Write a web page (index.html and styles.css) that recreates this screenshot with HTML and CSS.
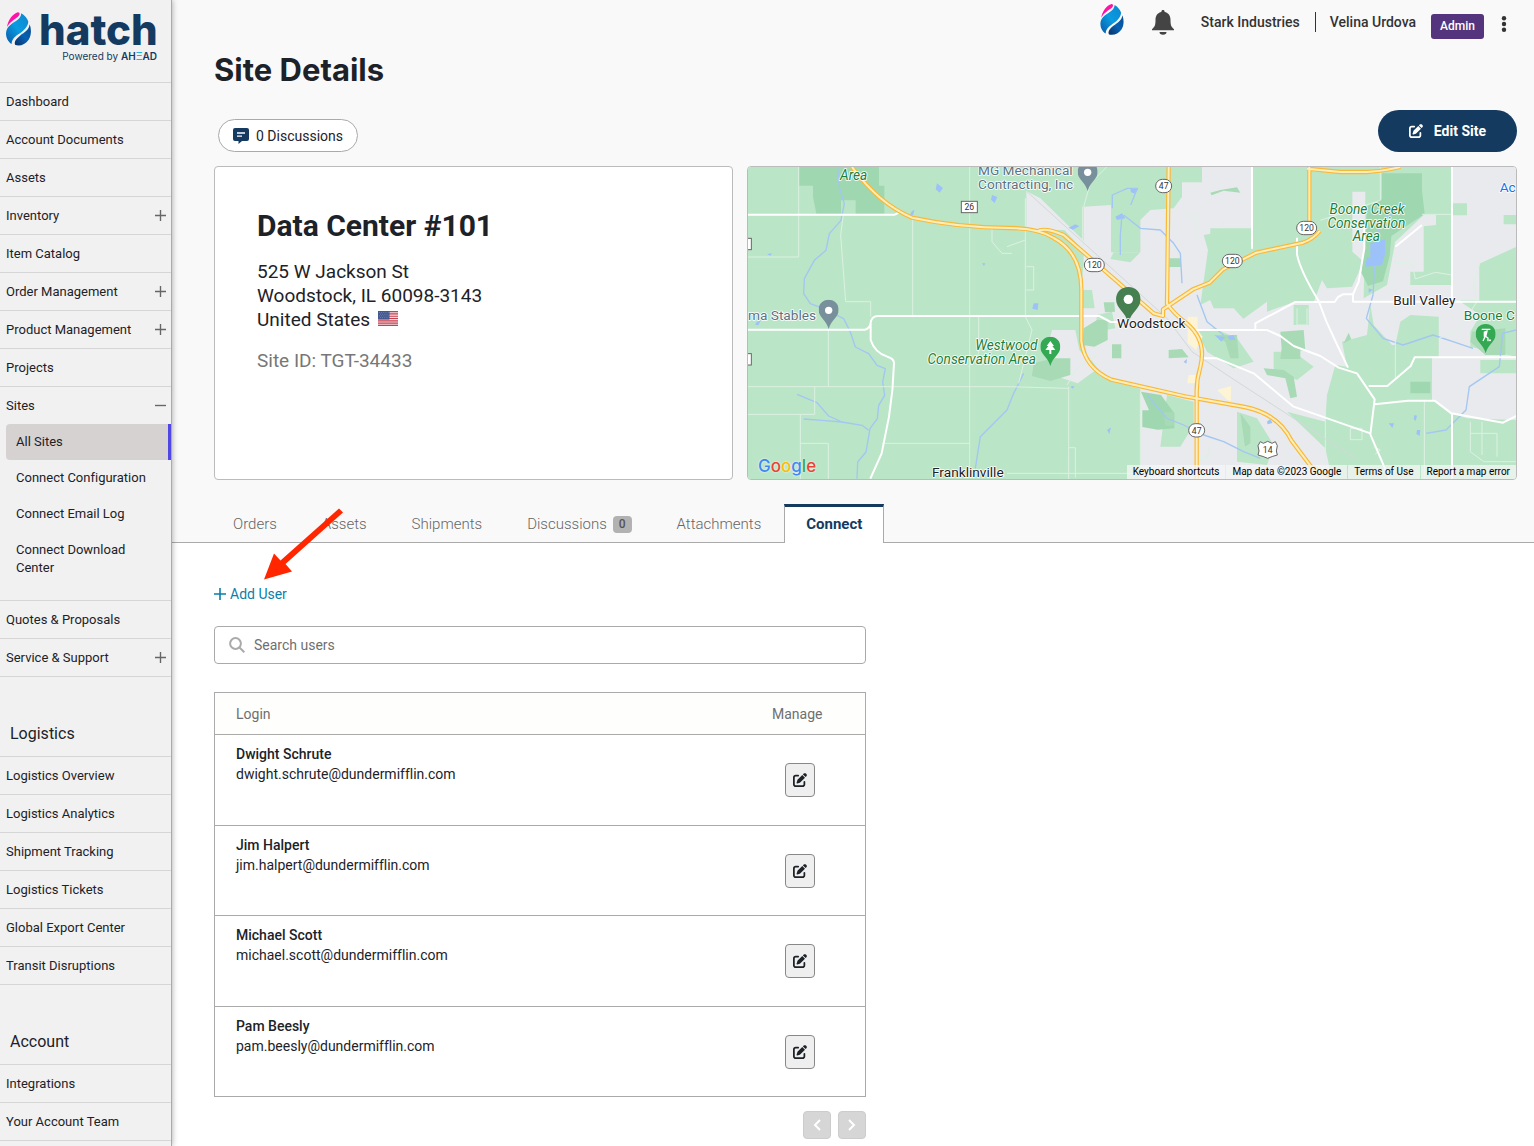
FILE: index.html
```html
<!DOCTYPE html>
<html lang="en">
<head>
  <meta charset="UTF-8">
  <meta name="viewport" content="width=device-width, initial-scale=1.0">
  <title>Site Details</title>
  <link rel="stylesheet" href="styles.css">
</head>
<body>
  <!-- shared icons -->
  <svg class="sprite" aria-hidden="true">
    <defs>
      <linearGradient id="drop-mid" x1="0" y1="1" x2="1" y2="0">
        <stop offset="0" stop-color="#0759a8"/>
        <stop offset=".5" stop-color="#0a9be0"/>
        <stop offset="1" stop-color="#0b86cf"/>
      </linearGradient>
      <linearGradient id="drop-low" x1="0" y1="1" x2="1" y2="0">
        <stop offset="0" stop-color="#0a2f66"/>
        <stop offset=".5" stop-color="#0561b4"/>
        <stop offset="1" stop-color="#0b4a8c"/>
      </linearGradient>
    </defs>
    <symbol id="drop" viewBox="0 0 75 100">
      <path fill="#ff12a8" d="M3 44C6 24 20 4 36 0c7 1 6 8 0 13C26 21 12 28 3 44z"/>
      <path fill="url(#drop-mid)" d="M46 3c10 6 18 15 21 25-2 18-16 28-30 38-13 9-20 17-20 29C6 89 0 76 0 62c1-11 6-18 13-24C27 26 44 22 46 3z"/>
      <path fill="url(#drop-low)" d="M71 36c6 16 5 34-3 46-10 15-26 20-40 16-6-10 4-20 14-28 14-10 27-17 29-34z"/>
    </symbol>
    <symbol id="edit" viewBox="0 0 512 512">
      <path fill="currentColor" d="M471.6 21.7c-21.9-21.9-57.3-21.9-79.2 0L362.3 51.7l97.9 97.9 30.1-30.1c21.9-21.9 21.9-57.3 0-79.2L471.6 21.7zm-299.2 220c-6.1 6.1-10.8 13.6-13.5 21.9l-29.6 88.8c-2.9 8.6-.6 18.1 5.8 24.6s15.9 8.7 24.6 5.8l88.8-29.6c8.2-2.7 15.7-7.4 21.9-13.5L437.7 172.3 339.7 74.3 172.4 241.7zM96 64C43 64 0 107 0 160V416c0 53 43 96 96 96H352c53 0 96-43 96-96V320c0-17.7-14.3-32-32-32s-32 14.3-32 32v96c0 17.7-14.3 32-32 32H96c-17.7 0-32-14.3-32-32V160c0-17.7 14.3-32 32-32h96c17.7 0 32-14.3 32-32s-14.3-32-32-32H96z"/>
    </symbol>
    <symbol id="plus" viewBox="0 0 12 12">
      <path fill="none" stroke="currentColor" stroke-width="1.500" d="M6 0v12M0 6h12"/>
    </symbol>
    <symbol id="pin" viewBox="0 0 60 88">
      <path fill="currentColor" d="M30 0C12 0 0 13 0 30c0 23 22 29 30 58 8-29 30-35 30-58C60 13 48 0 30 0z"/>
    </symbol>
  </svg>

  <div class="app">
    <aside class="sidebar">
      <a class="logo" href="#">
        <svg class="logo-drop" aria-hidden="true"><use href="#drop"/></svg>
        <span class="logo-text">
          <span class="logo-name">hatch</span>
          <span class="logo-by">Powered by <b>AH<i>Ξ</i>AD</b></span>
        </span>
      </a>
      <nav>
        <ul class="menu">
          <li><a href="#">Dashboard</a></li>
          <li><a href="#">Account Documents</a></li>
          <li><a href="#">Assets</a></li>
          <li><a href="#">Inventory <svg class="toggle"><use href="#plus"/></svg></a></li>
          <li><a href="#">Item Catalog</a></li>
          <li><a href="#">Order Management <svg class="toggle"><use href="#plus"/></svg></a></li>
          <li><a href="#">Product Management <svg class="toggle"><use href="#plus"/></svg></a></li>
          <li><a href="#">Projects</a></li>
          <li>
            <a href="#">Sites <svg class="toggle" viewBox="0 0 12 12"><path d="M0 6h12" stroke="currentColor" stroke-width="1.500"/></svg></a>
            <ul class="submenu">
              <li><a class="active" href="#">All Sites</a></li>
              <li><a href="#">Connect Configuration</a></li>
              <li><a href="#">Connect Email Log</a></li>
              <li><a href="#">Connect Download Center</a></li>
            </ul>
          </li>
          <li><a href="#">Quotes &amp; Proposals</a></li>
          <li><a href="#">Service &amp; Support <svg class="toggle"><use href="#plus"/></svg></a></li>
        </ul>
        <h2>Logistics</h2>
        <ul class="menu">
          <li><a href="#">Logistics Overview</a></li>
          <li><a href="#">Logistics Analytics</a></li>
          <li><a href="#">Shipment Tracking</a></li>
          <li><a href="#">Logistics Tickets</a></li>
          <li><a href="#">Global Export Center</a></li>
          <li><a href="#">Transit Disruptions</a></li>
        </ul>
        <h2>Account</h2>
        <ul class="menu">
          <li><a href="#">Integrations</a></li>
          <li><a href="#">Your Account Team</a></li>
        </ul>
      </nav>
    </aside>

    <div class="content">
      <div class="top">
        <header class="topbar">
          <svg class="top-drop" aria-hidden="true"><use href="#drop"/></svg>
          <button class="icon-btn bell" aria-label="Notifications">
            <svg width="22" height="25" viewBox="0 0 22 25"><path fill="#444" d="M11 0c-1 0-1.600.7-1.600 1.600v.5C5.600 2.800 3.500 5.800 3.500 9.800c0 5-.5 7-3.500 9.400V20.200h22v-1c-3-2.400-3.500-4.400-3.500-9.400 0-4-2.100-7-5.900-7.700v-.5C12.600.7 12 0 11 0zM7.500 22h7a3.500 2.800 0 0 1-7 0z"/></svg>
          </button>
          <a class="company" href="#">Stark Industries</a>
          <a class="user" href="#">Velina Urdova</a>
          <span class="role">Admin</span>
          <button class="icon-btn more" aria-label="More">
            <svg width="6" height="16" viewBox="0 0 6 16"><g fill="#333"><circle cx="3" cy="2.200" r="2.200"/><circle cx="3" cy="8" r="2.200"/><circle cx="3" cy="13.800" r="2.200"/></g></svg>
          </button>
        </header>

        <h1>Site Details</h1>

        <div class="actions">
          <button class="discuss">
            <svg width="16" height="16" viewBox="0 0 16 16"><path fill="#143a60" d="M2 0h12a2 2 0 0 1 2 2v9a2 2 0 0 1-2 2H9l-3.500 3V13H2a2 2 0 0 1-2-2V2a2 2 0 0 1 2-2z"/><path stroke="#fff" stroke-width="1.300" d="M4 5h8M4 8.200h5"/></svg>
            0 Discussions
          </button>
          <button class="edit-site">
            <svg width="14" height="14" aria-hidden="true"><use href="#edit"/></svg>
            Edit Site
          </button>
        </div>

        <div class="cards">
          <section class="card site">
            <h2>Data Center #101</h2>
            <address>
              525 W Jackson St<br>
              Woodstock, IL 60098-3143<br>
              United States
              <svg class="flag" width="20" height="15" viewBox="0 0 20 15" role="img" aria-label="US">
                <rect width="20" height="15" rx="1" fill="#f3dfe2"/>
                <path stroke="#c8414f" stroke-width="1.150" d="M0 .6h20M0 2.900h20M0 5.200h20M0 7.500h20M0 9.800h20M0 12.100h20M0 14.400h20"/>
                <rect width="11.500" height="8.600" fill="#43588f"/>
                <path stroke="#9fabc9" stroke-width=".6" stroke-dasharray=".8 1.400" d="M1 1.500h10M2 3.200h9M1 4.900h10M2 6.600h9"/>
              </svg>
            </address>
            <p class="site-id">Site ID: TGT-34433</p>
          </section>

          <section class="card map">
            <svg class="map-canvas" viewBox="3 6 2304 936" preserveAspectRatio="xMidYMid slice">
              <rect width="2320" height="950" fill="#bbe5c7"/>
              <!-- built-up land -->
              <g fill="#e8eaed">
                <path d="M838 78l42 22 210 205-32 10-50-60-56-60H838z"/>
                <path d="M1010 125L1092 120V262H1180V165L1210 135 1280 130 1305 95V52H1365V6H1515V190H1390V330L1370 360 1400 430H1460L1515 490 1560 440 1640 412H1700L1725 345 1740 370 1815 365 1850 290 1816 260V80H1855V170L1850 400 1920 360 1945 230 2030 150H2067V180L2030 184V320H1990V360H2140V410L2200 450 2170 500V545L2307 575V765L2160 760 2115 745 2055 705V575H2075V455L1990 450 1960 470 1945 540H1935L1880 480 1870 420 1860 510 1785 530 1800 605 1765 600 1740 690 1735 770 1620 740 1735 850 1755 942H1180V672L1110 650 1060 620 1020 570 1005 500V345L1010 290z"/>
                <path d="M2115 6h192v240l-110 50v110h-82zM1560 410v120l-60 60-50-100zM915 495h70l12 60 50 60-55 40-60-20-10-50-15-60z"/>
              </g>
              <!-- farmland pieces inside the town -->
              <g fill="#bbe5c7">
                <path d="M1390 205h125v115l-30 20-45 90-40-30-40 20zM1005 375h30l8 55h-38zM1100 262h80l-30 30-60-10zM1370 210l60-10 20 60-60 20zM1050 450l45-10 10 50-60 10z"/>
                <path d="M1260 690l80 20v70l-40 65-60 0zM1470 740l60 20 50 80-20 60-90-10z"/>
                <path d="M1350 500l50-10 70 30 50 70-60 20-80-50zM1580 560l60 0 60 45-50 40-70-30z"/>
                <path d="M2110 115h50v36h-50zM2270 150h37v28h-37zM1640 420h45v60h-45zM2200 585h107v40h-107z"/>
              </g>
              <!-- parks -->
              <g fill="#9fd8b0">
                <path d="M156 6h240v56h16v84h-86v-40h-44v40h-74l-10-50V62h-42zM1905 25h120v50l8 72-100 66-5 60-20 76-45 14-20-40 10-100 8-100 44-20zM1990 650h60v35h-60z"/>
                <path d="M1182 680l60 10 40 55v45l-50 4-46-8v-50h20z"/>
              </g>
              <g fill="#a8dab5">
                <path d="M860 595l60-15 50 0v50l-60 18-55-15zM1010 490l40-25h32v60l-40 20-35-5zM1095 538h28v42h-28zM1265 555l40-3 20 25-60 3zM1070 412l32 0 2 28-30 2zM1267 280h35v26h-35zM1390 83l30-8 50-8 10 16-50-6-36 14zM1400 510l70 0 5 70-25 0-15-50zM1250 742h30v40h-25zM1600 500l70-5 5 60-70 8zM1605 540h55v42h-60zM1550 610l60 5 30 20 10 60-20 5-15-60-55-10zM2175 500l100-10v80h-60l-45-40zM1790 535l15-32 8 20zM1480 745l30 40v50l-16 10z"/>
              </g>
              <g fill="#fdf3d5">
                <path d="M1322 455h30v40l15 20-20 40-25-20zM1325 630h20v25h-25zM1410 675l42-12v45l-12-4z"/>
              </g>
              <!-- water -->
              <g fill="#9dc2f9">
                <path d="M1870 235l45-12 0 40-10 38-50 4 5-30 10 4zM570 55l18 14-10 14-12-10zM735 90l16 6-8 18-11-10zM495 138l8-4-5 16-12 4zM1105 155l20-10 10 15-25 5zM965 188l20-10 12 6-20 10zM1150 72l24 0-10 14-12-4zM860 415l14 0-2 20-16-4zM1405 512l30 4-12 14zM1440 515l20-5 5 14-15 2zM1865 370l12 4-12 10zM2010 795l10 0-2 18-10-6zM1080 795l12-8-5 20zM1925 775l16 0-5 14zM30 470l12-5-8 16-10-2zM60 268l14-4-3 8zM705 295l10 0-4 8zM1560 770l10-8 6 12-14 4zM2002 750l8 2-4 16-6-6zM1310 590l10-8-2 14zM970 665l12-3-4 9z"/>
              </g>
              <g class="river">
                <path d="M272 6l5 60 15 50-10 50-35 40-10 50-35 30-30 55 -2 45 20 30 40 15 60 30 20 40 15 45 40 20 25 35 25 10 -8 40 6 40-18 30-4 40-22 30-12 70-25 30-2 50"/>
                <path d="M150 688l60 25 35 40 40 18-60-5-55-4M285 771l60 10 20 15M780 735l-80 80-15 95M780 735l20-50 30-60M1200 690l60 70 50 20 60 30 60 20 60 30 50 20M1130 150l50 40 60 5 40 40 20 30 5 90M1430 510l-50-40-30-80M1125 150l-5 60 0 60M1096 130V90l45-20h30l-20 50M1885 225l20-60 70-50M1883 300l-5 90-20 70 50 60 60 20 90-30 60 20 60 20M2307 495l-40 10-10 100-90 60-10 70-60 60-60 10"/>
              </g>
              <!-- minor roads -->
              <g class="minor">
                <path d="M3 276h152V6M289 150l-8 60 15 200 75 0v45M497 160v290M668 6v925M3 665h780l180 5M244 495v170M3 748h200v-83M160 748v194M160 835h84v107M405 835h263M695 455v110l-30 40M735 190v40l30 35 30 0M780 245l55-20M835 100v355M835 455l20 40-40 160M965 665v277M1010 125l20-70 50-50M1180 680v240M1007 125v120M838 305h22v70h-22M965 848h20v90M780 925h570M1315 150h35v70M1430 190v-25M960 660l30-50 60-40M1350 880h30l10-40"/>
                <path d="M1900 6v100l-180 60M2115 148h-90M1945 230v410M1945 292h50l10 50 60-20 50 8M2032 708v234M1735 735v205M2200 290l-20 60 10 60-60 90-55 20M1650 430v50h30v-50M1810 790h35v34h-35zM2170 770v90l40 30h97M2205 770v100M2170 805h80v70M1880 845l20 10-15 12"/>
              </g>
              <path class="rail" d="M840 80l420 380 75 100 120 80 370 240"/>
              <!-- local roads -->
              <g class="road">
                <path d="M3 149h440l16-8M3 494h350q15-2 18-20 2-20 20-21h666l34 18h30M371 475v50q12 38 50 50 20 5 20 20-2 80-15 160l-22 110-34 76M1515 6v245M1345 495h215l-35 0v-20l120-64h118l10-15 15-8h30v22h490M1360 580h50l110 45 60 50 60 50 230 80M1650 218l0 50q10 50 65 140 20 60 50 120l38 80M1560 495l40 18 40 30 80 30 55 35 55 17 53 78-13 105 60 140M1865 663h56l70-60 12-26h304M1883 718l100-11h80l50 38 155 28 40-20M2115 6v404M1817 390l18-40 17-100V180M1945 245l80-65M2115 745v197"/>
              </g>
              <!-- highways -->
              <g class="highway-edge">
                <path d="M315 6q80 110 180 152 140 30 290 31 90 0 135 30 85 45 83 160v150q10 80 90 115l220 50 180 32q100 20 140 100l60 80 60 30"/>
                <path d="M870 200q20-15 80 10l270 235 28 8v-20l90-60 50-20 40-40 100-50 140-30q30-10 50-35"/>
                <path d="M1265 6l-5 410q20 30 60 60 60 50 40 130-12 40-11 80v256M1687 6v190M1680 11l100 10h80q50-2 100-15"/>
              </g>
              <g class="highway">
                <path d="M315 6q80 110 180 152 140 30 290 31 90 0 135 30 85 45 83 160v150q10 80 90 115l220 50 180 32q100 20 140 100l60 80 60 30"/>
                <path d="M870 200q20-15 80 10l270 235 28 8v-20l90-60 50-20 40-40 100-50 140-30q30-10 50-35"/>
                <path d="M1265 6l-5 410q20 30 60 60 60 50 40 130-12 40-11 80v256M1687 6v190M1680 11l100 10h80q50-2 100-15"/>
              </g>
              <!-- road shields -->
              <g class="shield">
                <rect x="643" y="109" width="48" height="34"/><text x="667" y="136">26</text>
                <rect x="-20" y="220" width="33" height="34"/><rect x="-20" y="566" width="33" height="34"/>
                <rect x="1226" y="43" width="48" height="40" rx="20"/><text x="1250" y="73">47</text>
                <rect x="1012" y="280" width="60" height="40" rx="20"/><text x="1042" y="310">120</text>
                <rect x="1426" y="268" width="60" height="40" rx="20"/><text x="1456" y="298">120</text>
                <rect x="1649" y="169" width="60" height="40" rx="20"/><text x="1679" y="199">120</text>
                <rect x="1325" y="776" width="48" height="40" rx="20"/><text x="1349" y="806">47</text>
                <path d="M1540 830l9 5 13-6 13 6 10-5 6 12q-6 18 0 28-16 4-29 10-13-6-29-10 6-10 0-28z"/><text x="1562" y="863">14</text>
              </g>
              <!-- places -->
              <g class="label park">
                <text x="320" y="46">Area</text>
                <text x="778" y="554">Westwood</text><text x="704" y="596">Conservation Area</text>
                <text x="1860" y="146">Boone Creek</text><text x="1858" y="188">Conservation</text><text x="1858" y="229">Area</text>
              </g>
              <g class="label poi">
                <text class="start" x="693" y="30">MG Mechanical</text>
                <text class="start" x="693" y="72">Contracting, Inc</text>
                <text class="start" x="3" y="465">ma Stables</text>
              </g>
              <g class="label">
                <text class="start" x="555" y="935">Franklinville</text>
                <text x="2032" y="420">Bull Valley</text>
                <text class="start golf" x="2150" y="464">Boone C</text>
                <text class="start transit" x="2258" y="81">Ac</text>
              </g>
              <use href="#pin" x="215" y="404" width="60" height="88" color="#78909c"/><circle cx="245" cy="436" r="11" fill="#fff"/>
              <use href="#pin" x="992" y="-10" width="60" height="88" color="#78909c"/><circle cx="1022" cy="22" r="11" fill="#fff"/>
              <use href="#pin" x="880" y="515" width="60" height="88" color="#34a853"/>
              <path fill="#fff" d="M910 528l11 15h-5l9 12h-12v12h-6v-12h-12l9-12h-5z"/>
              <use href="#pin" x="2186" y="477" width="60" height="88" color="#34a853"/>
              <path fill="none" stroke="#fff" stroke-width="4" d="M2204 493h26M2214 503v12l-6 13M2214 513l9 6v10"/><path fill="#fff" d="M2210 500l12-5 0 4-4 16h-8z"/><circle cx="2229" cy="526" r="3" fill="#fff"/>
              <use href="#pin" x="1107" y="366" width="74" height="108" color="#467f50"/><circle cx="1144" cy="403" r="14" fill="#fff"/>
              <g class="label"><text x="1213" y="489">Woodstock</text></g>
            </svg>
            <a class="google" href="#"><span class="g-blue">G</span><span class="g-red">o</span><span class="g-yellow">o</span><span class="g-blue">g</span><span class="g-green">l</span><span class="g-red">e</span></a>
            <div class="map-bar">
              <button>Keyboard shortcuts</button>
              <span>Map data ©2023 Google</span>
              <a href="#">Terms of Use</a>
              <a href="#">Report a map error</a>
            </div>
          </section>
        </div>

        <nav class="tabs">
          <a href="#">Orders</a>
          <a href="#">Assets</a>
          <a href="#">Shipments</a>
          <a href="#">Discussions <span class="count">0</span></a>
          <a href="#">Attachments</a>
          <a class="current" href="#">Connect</a>
        </nav>
      </div>

      <main class="panel">
        <div class="add-row">
          <a class="add-user" href="#"><svg width="12" height="12" viewBox="0 0 12 12"><path stroke="currentColor" stroke-width="1.600" d="M6 0v12M0 6h12"/></svg> Add User</a>
          <svg class="arrow" width="80" height="72" viewBox="0 0 80 72" aria-hidden="true">
            <path fill="#ff2600" d="M76 .5l4 4-57.500 51.500 6.500 7.500L1 71.500l10-26 6.500 7z"/>
          </svg>
        </div>

        <div class="search">
          <svg width="16" height="16" viewBox="0 0 16 16" aria-hidden="true"><g fill="none" stroke="#aaa" stroke-width="2"><circle cx="6.500" cy="6.500" r="5.400"/><path d="M10.500 10.500l4.800 4.800"/></g></svg>
          <input type="search" aria-label="Search users" placeholder="Search users">
        </div>

        <table class="users">
          <thead>
            <tr><th>Login</th><th class="manage">Manage</th></tr>
          </thead>
          <tbody>
            <tr>
              <td><strong>Dwight Schrute</strong><br>dwight.schrute@dundermifflin.com</td>
              <td class="manage"><button aria-label="Edit Dwight Schrute"><svg width="14" height="14"><use href="#edit"/></svg></button></td>
            </tr>
            <tr>
              <td><strong>Jim Halpert</strong><br>jim.halpert@dundermifflin.com</td>
              <td class="manage"><button aria-label="Edit Jim Halpert"><svg width="14" height="14"><use href="#edit"/></svg></button></td>
            </tr>
            <tr>
              <td><strong>Michael Scott</strong><br>michael.scott@dundermifflin.com</td>
              <td class="manage"><button aria-label="Edit Michael Scott"><svg width="14" height="14"><use href="#edit"/></svg></button></td>
            </tr>
            <tr>
              <td><strong>Pam Beesly</strong><br>pam.beesly@dundermifflin.com</td>
              <td class="manage"><button aria-label="Edit Pam Beesly"><svg width="14" height="14"><use href="#edit"/></svg></button></td>
            </tr>
          </tbody>
        </table>

        <div class="pager">
          <button disabled aria-label="Previous page"><svg width="8" height="12" viewBox="0 0 8 12"><path d="M7 1L2 6l5 5" fill="none" stroke="#fff" stroke-width="2"/></svg></button>
          <button disabled aria-label="Next page"><svg width="8" height="12" viewBox="0 0 8 12"><path d="M1 1l5 5-5 5" fill="none" stroke="#fff" stroke-width="2"/></svg></button>
        </div>
      </main>
    </div>
  </div>
</body>
</html>
```
FILE: styles.css
```css
*{
  box-sizing: border-box;
}
body{
  margin: 0;
  font-family: Roboto, "Liberation Sans", sans-serif;
  font-size: 14px;
  font-variant-ligatures: none;
  line-height: 20px;
  color: #1d2228;
  background: #fff;
}
a{
  color: inherit;
  text-decoration: none;
}
button, input{
  font: inherit;
  color: inherit;
}
button{
  cursor: pointer;
}
ul{
  list-style: none;
  margin: 0;
  padding: 0;
}
svg{
  flex: none;
}
.sprite{
  position: absolute;
  width: 0;
  height: 0;
}
.app{
  display: flex;
  height: 100vh;
  overflow: hidden;
}

/* sidebar */
.sidebar{
  flex: none;
  width: 172px;
  overflow: hidden;
  background: #f1f1f1;
  border-right: 1px solid #aaa;
  box-shadow: 0 0 6px rgba(0, 0, 0, 0.35);
  z-index: 1;
}
.logo{
  display: flex;
  gap: 8px;
  height: 82px;
  padding: 12px 0 0 6px;
  color: #143a60;
}
.logo-drop{
  width: 25px;
  height: 34px;
}
.logo-text{
  display: flex;
  flex-direction: column;
  width: 118px;
}
.logo-name{
  font-family: Inter, sans-serif;
  font-weight: 800;
  font-size: 42px;
  line-height: 36px;
}
.logo-by{
  font-family: Inter, sans-serif;
  font-size: 10px;
  line-height: 16px;
  text-align: right;
}
.logo-by b{
  font-weight: 600;
}
.logo-by i{
  font-style: normal;
  color: #19b5e0;
}
.menu > li{
  border-top: 1px solid #d6d6d6;
}
.menu > li:last-child{
  border-bottom: 1px solid #d6d6d6;
}
.menu > li > a{
  display: flex;
  align-items: center;
  justify-content: space-between;
  height: 37px;
  padding: 0 5px 0 6px;
}
.menu a{
  font-size: 13px;
}
.toggle{
  width: 11px;
  height: 11px;
  color: #666;
}
.submenu{
  padding: 0 0 14px 6px;
}
.submenu a{
  display: block;
  padding: 9px 10px;
  line-height: 18px;
}
.submenu .active{
  background: #d6d2d2;
  border-right: 3px solid #4f46e5;
  border-radius: 4px 0 0 4px;
}
.sidebar h2{
  margin: 0;
  padding: 47px 10px 12px;
  font-size: 16px;
  font-weight: 400;
}

/* page head */
.content{
  flex: 1;
  min-width: 0;
}
.top{
  background: #f9f9f9;
  border-bottom: 1px solid #aaa;
}
.topbar{
  display: flex;
  align-items: center;
  justify-content: flex-end;
  height: 44px;
  padding-right: 27px;
  font-weight: 500;
  color: #333;
}
.top-drop{
  width: 24px;
  height: 31px;
  margin-bottom: 6px;
}
.icon-btn{
  display: flex;
  padding: 0;
  background: none;
  border: none;
}
.bell{
  margin: 0 27px 0 28px;
}
.user{
  margin-left: 15px;
  padding-left: 14px;
  border-left: 1px solid #333;
}
.role{
  margin: 8px 17px 0 15px;
  padding: 2px 9px 3px;
  border-radius: 3px;
  background: #53347d;
  color: #fff;
  font-size: 12px;
}
.more{
  margin-top: 4px;
}
h1{
  margin: 0;
  padding: 6px 42px 0;
  font-family: Inter, sans-serif;
  font-size: 31px;
  font-weight: 700;
  line-height: 40px;
}
.actions{
  display: flex;
  justify-content: space-between;
  align-items: flex-end;
  padding: 20px 17px 0 46px;
}
.discuss{
  display: flex;
  align-items: center;
  gap: 7px;
  height: 33px;
  padding: 0 14px;
  background: #fff;
  border: 1px solid #aaa;
  border-radius: 17px;
}
.edit-site{
  display: flex;
  align-items: center;
  gap: 11px;
  height: 42px;
  padding: 0 31px;
  background: #143a60;
  border: none;
  border-radius: 21px;
  color: #fff;
  font-weight: 700;
}
.cards{
  display: grid;
  grid-template-columns: 519fr 770fr;
  gap: 14px;
  padding: 14px 17px 24px 42px;
}
.card{
  height: 314px;
  border: 1px solid #bbb;
  border-radius: 4px;
  background: #fff;
}
.site{
  padding: 41px 42px;
}
.site h2{
  margin: 0 0 16px;
  font-size: 30px;
  line-height: 36px;
}
.site address{
  font-size: 19px;
  font-style: normal;
  line-height: 24px;
}
.flag{
  margin-left: 3px;
}
.site-id{
  margin: 17px 0 0;
  font-size: 19px;
  line-height: 24px;
  color: #777;
}

/* map */
.map{
  position: relative;
  overflow: hidden;
}
.map-canvas{
  display: block;
  width: 100%;
  height: 100%;
}
.river{
  fill: none;
  stroke: #a3c6f3;
  stroke-width: 4;
  stroke-linejoin: round;
}
.minor{
  fill: none;
  stroke: #dcf1e2;
  stroke-width: 3;
}
.rail{
  fill: none;
  stroke: #d3d8da;
  stroke-width: 3;
}
.road{
  fill: none;
  stroke: #fff;
  stroke-width: 6;
  stroke-linejoin: round;
}
.highway-edge, .highway{
  fill: none;
  stroke: #f9b938;
  stroke-width: 13;
  stroke-linejoin: round;
}
.highway{
  stroke: #ffeebb;
  stroke-width: 6;
}
.shield rect, .shield path{
  fill: #fff;
  stroke: #666;
  stroke-width: 3;
}
.shield text{
  font-size: 26px;
  fill: #333;
  text-anchor: middle;
}
.label text{
  font-size: 41px;
  text-anchor: middle;
  fill: #202124;
  stroke: #fff;
  stroke-width: 5;
  stroke-linejoin: round;
  paint-order: stroke;
}
.label .start{
  text-anchor: start;
}
.park text{
  font-style: italic;
  fill: #188038;
}
.poi text{
  fill: #5b7282;
}
.label .golf{
  fill: #188038;
}
.label .transit{
  fill: #1a73e8;
}
.google{
  position: absolute;
  left: 10px;
  bottom: 3px;
  font-family: Inter, sans-serif;
  font-size: 17px;
  font-weight: 500;
  text-shadow: 0 0 2px #fff;
}
.g-blue{
  color: #4285f4;
}
.g-red{
  color: #ea4335;
}
.g-yellow{
  color: #fbbc05;
}
.g-green{
  color: #34a853;
}
.map-bar{
  position: absolute;
  right: 0;
  bottom: 0;
  display: flex;
  gap: 1px;
  font-size: 10px;
  line-height: 14px;
  color: #000;
}
.map-bar > *{
  padding: 0 6px;
  background: rgba(245, 245, 245, 0.75);
  border: none;
}

/* tabs */
.tabs{
  display: flex;
  padding-left: 42px;
  margin-bottom: -1px;
  font-size: 15px;
  font-weight: 300;
  color: #666;
}
.tabs a{
  display: flex;
  align-items: center;
  gap: 6px;
  height: 39px;
  padding: 0 23px 0 22px;
}
.tabs a:first-child{
  padding-left: 19px;
}
.count{
  margin-top: 2px;
  padding: 0 6px;
  border-radius: 4px;
  background: #b2b2b2;
  color: #555;
  font-size: 12px;
  font-weight: 500;
  line-height: 17px;
}
.tabs .current{
  padding: 0 21px 2px;
  background: #fff;
  border: 1px solid #aaa;
  border-top: 3px solid #143a60;
  border-bottom: none;
  color: #143a60;
  font-weight: 700;
}

/* users */
.panel{
  width: 50%;
  min-width: 694px;
  padding: 41px 0 0 42px;
}
.add-row{
  position: relative;
}
.add-user{
  display: inline-flex;
  align-items: center;
  gap: 4px;
  color: #0a7fa8;
}
.arrow{
  position: absolute;
  left: 49px;
  bottom: 25px;
}
.search{
  display: flex;
  align-items: center;
  gap: 9px;
  height: 38px;
  margin: 21px 0 28px;
  padding: 0 14px;
  border: 1px solid #aaa;
  border-radius: 4px;
}
.search input{
  flex: 1;
  padding: 0;
  border: none;
  outline: none;
  background: none;
}
.search input::placeholder{
  color: #6f6f6f;
}
.users{
  width: 100%;
  border: 1px solid #aaa;
  border-collapse: collapse;
}
.users th{
  height: 42px;
  padding: 0 21px;
  background: #fefefc;
  color: #6f6f6f;
  font-weight: 400;
  text-align: left;
}
.users td{
  height: 90px;
  padding: 9px 21px;
  border-top: 1px solid #aaa;
  vertical-align: top;
}
.users tr:nth-child(odd) td{
  height: 91px;
}
.users strong{
  font-weight: 500;
}
.users .manage{
  width: 136px;
  padding: 0;
  text-align: center;
  vertical-align: middle;
}
.users td.manage{
  padding-left: 5px;
}
.users button{
  display: inline-flex;
  align-items: center;
  justify-content: center;
  width: 30px;
  height: 34px;
  padding: 0;
  background: #efefef;
  border: 1px solid #888;
  border-radius: 4px;
}
.pager{
  display: flex;
  justify-content: flex-end;
  gap: 7px;
  margin-top: 14px;
}
.pager button{
  display: flex;
  align-items: center;
  justify-content: center;
  width: 28px;
  height: 28px;
  padding: 0;
  background: #d6d6d6;
  border: 1px solid #ccc;
  border-radius: 4px;
}
```
